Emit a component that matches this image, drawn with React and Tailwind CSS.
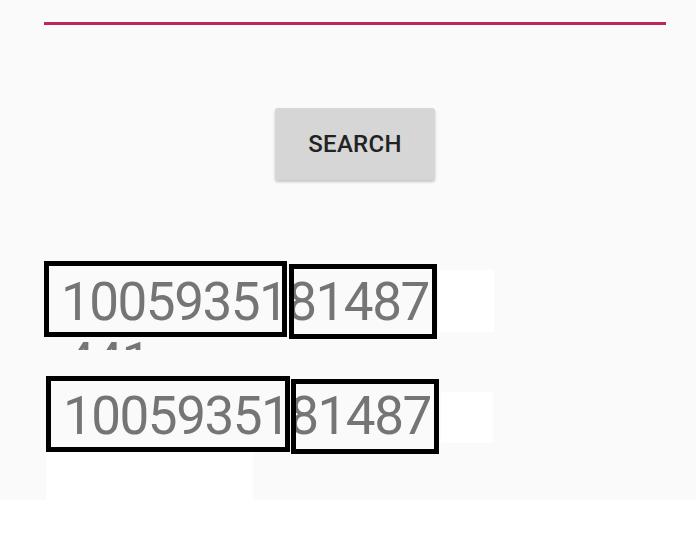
export default function App() {
	const numFont = { fontFamily: "Roboto, 'Liberation Sans', sans-serif" };

	return (
		<div className="w-[696px] bg-white" style={numFont}>
			<div className="h-[500px] bg-[#fafafa] pl-[44px] pr-[30px] pt-[22px]">
				<div className="h-[3px] bg-[#c0245c]" />

				<div className="flex justify-center mt-[83px]">
					<button className="w-[160px] h-[72px] rounded-[3px] bg-[#d6d6d6] shadow-[0_2px_3px_rgba(0,0,0,0.22)] text-[24px] font-medium text-[#222222] tracking-[0.3px]">
						SEARCH
					</button>
				</div>

				{/* first result */}
				<div className="relative mt-[92px]">
					<div className="h-[78px] overflow-hidden text-[53px] leading-[60px] text-[#757575] tracking-[-1.5px] pl-[17px]">
						<div>1005935181487</div>
						<div className="pl-[4px]">441</div>
					</div>
					<div className="absolute left-0 top-[-11px] w-[243px] h-[76px] border-[5px] border-black" />
					<div className="absolute left-[245px] top-[-8px] w-[148px] h-[75px] border-[5px] border-black" />
					<div className="absolute left-[395px] top-[-2px] w-[55px] h-[62px] bg-white" />
				</div>

				{/* second result */}
				<div className="relative mt-[36px]">
					<div className="h-[66px] overflow-hidden text-[53px] leading-[60px] text-[#757575] tracking-[-1.5px] pl-[19px]">
						<div>1005935181487</div>
					</div>
					<div className="absolute left-[2px] top-[-10px] w-[244px] h-[76px] border-[5px] border-black" />
					<div className="absolute left-[247px] top-[-7px] w-[148px] h-[75px] border-[5px] border-black" />
					<div className="absolute left-[397px] top-[6px] w-[52px] h-[51px] bg-white" />
					<div className="absolute left-[2px] top-[66px] w-[207px] h-[48px] bg-white" />
				</div>
			</div>
		</div>
	);
}
